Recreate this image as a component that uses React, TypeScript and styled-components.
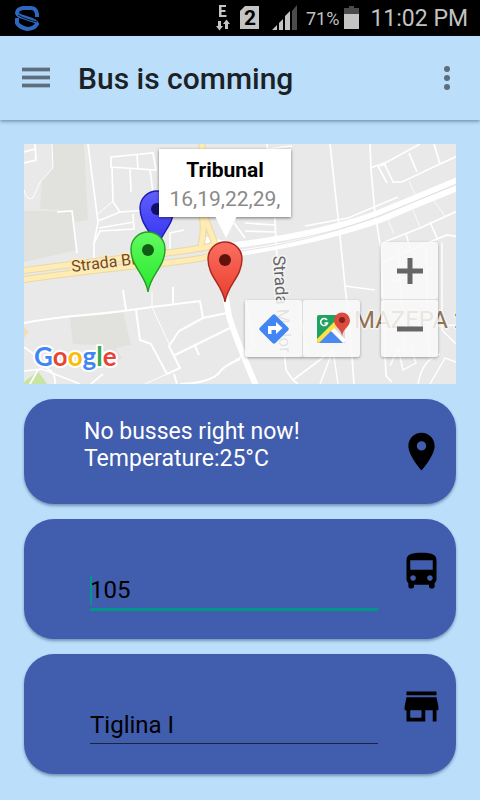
import React from "react";
import styled, { createGlobalStyle } from "styled-components";
import { MdPlace, MdDirectionsBus, MdStore } from "react-icons/md";

const GlobalStyle = createGlobalStyle`
  * { box-sizing: border-box; }
  body { margin: 0; background: #bbdefb; font-family: Roboto, sans-serif; }
  button, input { font-family: inherit; }
`;

const Screen = styled.div`
  min-height: 100vh;
  background: #bbdefb;
`;

const StatusBar = styled.div`
  display: flex;
  align-items: center;
  justify-content: space-between;
  height: 36px;
  padding: 0 12px 0 15px;
  background: #000;
  color: #c2c2c2;
`;

const StatusGroup = styled.div`
  display: flex;
  align-items: center;
`;

const Battery = styled.span`
  margin-left: 8px;
  margin-right: 5px;
  font-size: 18px;
`;

const Clock = styled.time`
  margin-left: 11px;
  padding-top: 2px;
  font-size: 23px;
  line-height: 34px;
`;

const AppBar = styled.header`
  display: flex;
  align-items: center;
  height: 84px;
  padding: 0 9px 0 12px;
  background: #bbdefb;
  box-shadow: 0 1px 4px rgba(20, 50, 80, 0.55);
`;

const BarButton = styled.button`
  display: flex;
  align-items: center;
  justify-content: center;
  width: 48px;
  height: 48px;
  padding: 0;
  border: 0;
  background: transparent;
  color: #5d6e7c;
`;

const Title = styled.h1`
  flex: 1;
  margin: 0 0 0 18px;
  padding-top: 2px;
  font-size: 30px;
  line-height: 36px;
  font-weight: 500;
  color: #1b2125;
`;

const Content = styled.main`
  display: flex;
  flex-direction: column;
  gap: 15px;
  padding: 24px;
`;

const MapPanel = styled.section`
  position: relative;
  height: 240px;
  overflow: hidden;
  background: #e9e9e9;
`;

const MapDrawing = styled.svg`
  display: block;
  width: 100%;
  height: 100%;
`;

const InfoWindow = styled.div`
  position: absolute;
  top: 5px;
  left: 135px;
  width: 132px;
  height: 68px;
  padding: 8px 0;
  background: #fff;
  box-shadow: 0 1px 3px rgba(0, 0, 0, 0.5);
  text-align: center;
  font-size: 21px;
  &::after {
    content: "";
    position: absolute;
    top: 67px;
    left: 56px;
    border: 11px solid transparent;
    border-top: 22px solid #fff;
    border-bottom: 0;
  }
`;

const InfoTitle = styled.div`
  line-height: 26px;
  font-weight: 700;
  color: #000;
`;

const InfoText = styled.div`
  line-height: 32px;
  color: #8a8a8a;
`;

const MapControls = styled.div<{ $vertical?: boolean }>`
  position: absolute;
  right: ${(p) => (p.$vertical ? "18px" : "96px")};
  bottom: 27px;
  display: flex;
  flex-direction: ${(p) => (p.$vertical ? "column" : "row")};
  gap: 1px;
  border-radius: 3px;
  background: rgba(205, 205, 205, 0.4);
  box-shadow: 0 1px 3px rgba(0, 0, 0, 0.35);
`;

const MapButton = styled.button`
  display: flex;
  align-items: center;
  justify-content: center;
  width: 57px;
  height: 57px;
  padding: 0;
  border: 0;
  border-radius: 3px;
  background: rgba(255, 255, 255, 0.75);
`;

const Card = styled.section<{ $short?: boolean }>`
  display: flex;
  justify-content: space-between;
  min-height: ${(p) => (p.$short ? "105px" : "120px")};
  padding: 0 12px 0 ${(p) => (p.$short ? "60px" : "66px")};
  border-radius: 30px;
  background: #415dae;
  box-shadow: 0 2px 3px rgba(30, 60, 100, 0.45);
`;

const Message = styled.p`
  margin: 19px 0 0;
  font-size: 23px;
  line-height: 27px;
  color: #fff;
`;

const CardIcon = styled.label`
  display: flex;
  flex: none;
  margin-top: 30px;
  font-size: 45px;
  color: #000;
  height: 45px;
`;

const Field = styled.div`
  position: relative;
  flex: 1;
  margin-top: 53px;
  margin-right: 21px;
`;

const FieldInput = styled.input<{ $active?: boolean }>`
  display: block;
  width: 100%;
  height: ${(p) => (p.$active ? "39px" : "37px")};
  padding: 0;
  border: 0;
  border-bottom: ${(p) => (p.$active ? "3px solid #009688" : "1px solid #1b2340")};
  border-radius: 0;
  outline: 0;
  background: transparent;
  font-size: 24px;
  color: #000;
`;

const Caret = styled.span`
  position: absolute;
  left: 0;
  top: 4px;
  width: 2px;
  height: 29px;
  background: #009688;
`;

const PIN =
  "M0 0C-2 -17 -17 -25 -17 -43C-17 -53 -9 -60 0 -60C9 -60 17 -53 17 -43C17 -25 2 -17 0 0Z";

function Pin({ x, y, fill, edge, dot }: { x: number; y: number; fill: string; edge: string; dot: string }) {
  return (
    <g transform={`translate(${x} ${y})`}>
      <path d={PIN} fill={`url(#${fill})`} stroke={edge} strokeWidth="1.4" />
      <circle cy="-42" r="6" fill={dot} />
    </g>
  );
}

function CityMap() {
  return (
    <MapDrawing viewBox="24 144 432 240" preserveAspectRatio="xMinYMin slice" role="img" aria-label="Map">
      <defs>
        <linearGradient id="redPin" x1="0" y1="0" x2="0" y2="1"><stop stopColor="#fb6f61" /><stop offset="1" stopColor="#e93c2b" /></linearGradient>
        <linearGradient id="greenPin" x1="0" y1="0" x2="0" y2="1"><stop stopColor="#62fa61" /><stop offset="1" stopColor="#27e929" /></linearGradient>
        <linearGradient id="bluePin" x1="0" y1="0" x2="0" y2="1"><stop stopColor="#605ffb" /><stop offset="1" stopColor="#302df0" /></linearGradient>
      </defs>
      <rect x="24" y="144" width="432" height="240" fill="#e9e9e9" />
      <g fill="#e1e2dd">
        <path d="M52 144H84L88 220L75 222L73 211L24 211V262L77 250L73 211L40 209L42 180L53 168Z" />
        <path d="M70 318L123 312L131 345L115 348L122 358L113 364L100 345L73 344Z" />
      </g>
      <path d="M24 382L38 371L47 384H24Z" fill="#c9e3a5" />
      <path d="M24 327L29 332L24 338Z" fill="#f5dcbb" />
      <g fill="none" stroke="#fff" strokeWidth="1.7">
        <path d="M24 163L36 160L35 144M24 152L35 149M88 144L98 222L94 243V258M57 212L72 211L77 253" />
        <path d="M52 144L53 168L40 182L33 198Q27 202 24 190" strokeWidth="1" />
        <path d="M111 157L153 153L156 170L111 167ZM137 155L138 169M130 168L131 192M150 169L153 193M112 167L113 202L120 212M98 221L120 212L148 210M99 228L134 222M94 243L100 231L134 229L133 214M170 251V233L184 230" />
        <path d="M24 323Q50 318 85 315T152 307L200 301L203 318M123 290L126 310M136 310L140 340L151 344L167 374L180 368L169 346L179 331L203 318L227 313M173 287V304M175 355L230 328M195 346L199 355M174 374L177 384M180 384Q210 383 219 373Q223 366 240 359" strokeWidth="2" />
        <path d="M152 292V307L170 346M113 201L98 214M167 374L145 384" strokeWidth="1" />
        <path d="M24 347L35 355M24 371L42 369L80 384M46 368Q56 372 55 384M38 370L30 384M91 384L103 374" />
        <path d="M267 144L275 220L277 260L280 310L286 370L293 380L333 350M267 149L292 146M293 380L298 384M245 223L275 225M245 231L275 232M234 223L245 238" />
        <path d="M330 144L338 217L345 286L350 330L354 384M345 286L375 290M370 144L371 170L375 213L381 250L384 330L386 376L392 382M305 226L348 218L398 197" />
        <path d="M370 168L387 162L420 144M378 166L387 183M385 165L393 182L402 182L440 164L460 155M380 166L386 164M409 153L417 172M434 144L440 164M382 243L420 228L460 210M430 222L437 238M406 234L410 248M382 262L447 235L460 237" />
        <path d="M382 329L456 325M442 243L442 330L456 344M390 366L398 348L403 370L416 363L410 345M418 384Q422 360 440 354M430 384L445 358L456 362M392 282L432 268M398 244L405 355M426 246L429 358M382 301H438M298 300L307 354M246 300L254 348L233 362M320 384L333 350L338 384" strokeWidth="1.4" />
        <path d="M409 181L416 196M413 210L420 227M386 215L394 234M432 198L445 216" strokeWidth="0.8" />
      </g>
      <g fill="none" stroke="#fff" strokeLinejoin="round">
        <path d="M218 247Q310 237 373 215Q410 200 460 179M218 256Q310 244 380 220Q420 203 460 187" strokeWidth="6" />
        <path d="M225 294L229 316Q234 334 257 388" strokeWidth="6" />
        <path d="M204 240L232 246L226 262" strokeWidth="7" />
      </g>
      <path d="M236 252Q310 242 376 217Q418 200 460 183" fill="none" stroke="#dcdcdc" strokeWidth="0.8" />
      {[{ c: "#e8d9a5", w: 7 }, { c: "#ffebb4", w: 5 }].map((road) => (
        <g key={road.c} fill="none" stroke={road.c} strokeWidth={road.w} strokeLinejoin="round">
          <path d="M20 271Q90 262 150 255T218 244M20 280Q100 269 155 264T218 253" />
          <path d="M202 140V215Q205 230 201 246M204 215L215 244" />
        </g>
      ))}
      <g stroke="#f4f4f4" strokeWidth="3" paintOrder="stroke" strokeLinejoin="round">
        <text x="72" y="272" transform="rotate(-7 72 272)" fontSize="16" fill="#704a27" stroke="#ffebb4">Strada Bra</text>
        <text x="273" y="256" transform="rotate(86 273 256)" fontSize="17" fill="#666">Strada Molor</text>
        <text x="354" y="328" fontSize="24" fill="#927350">MAZEPA 2</text>
      </g>
      <Pin x={157} y={251} fill="bluePin" edge="#1c1cb0" dot="#11116a" />
      <Pin x={148} y={292} fill="greenPin" edge="#249c25" dot="#125d15" />
      <Pin x={225} y={302} fill="redPin" edge="#a8281c" dot="#5f130d" />
      <text x="34" y="366" fontFamily="Lato, sans-serif" fontSize="26" fontWeight="700" stroke="#fff" strokeWidth="4" paintOrder="stroke" strokeLinejoin="round">
        <tspan fill="#4285f4">G</tspan><tspan fill="#ea4335">o</tspan><tspan fill="#fbbc05">o</tspan><tspan fill="#4285f4">g</tspan><tspan fill="#34a853">l</tspan><tspan fill="#ea4335">e</tspan>
      </text>
    </MapDrawing>
  );
}

function SignalIcons() {
  return (
    <svg width="76" height="28" viewBox="214 4 76 28" aria-hidden="true">
      <path d="M218 5H225V7H220.5V10H224.5V12H220.5V15H225.5V17H218Z" fill="#c4c4c4" />
      <path d="M217 21H220V26H222L218.500 30.500L215 26H217ZM224 29H227V24H229L225.500 19.500L222 24H224Z" fill="#c4c4c4" />
      <path d="M244 6H258V29H239V11Z" fill="#c4c4c4" />
      <text x="249" y="25" textAnchor="middle" fontSize="21" fontWeight="700" fill="#000">2</text>
      <path d="M271 30L276 25V30ZM278 23L282 19V30H278ZM284 16L289 11V30H284Z" fill="#c4c4c4" />
    </svg>
  );
}

export default function App() {
  return (
    <>
      <GlobalStyle />
      <Screen>
        <StatusBar>
          <svg width="24" height="25" viewBox="0 0 24 25" fill="none" stroke="#2e67c0" strokeWidth="4" aria-hidden="true">
            <path d="M22 11V8Q21 2 16 2H8Q2 3 2 7Q3 10 8 11L17 14Q22 16 22 18Q19 23 12 23Q4 21 2 17V12" />
            <path d="M3 9Q6 11 12 13T22 16" stroke="#000" strokeWidth="0.8" />
          </svg>
          <StatusGroup>
            <SignalIcons />
            <svg width="7" height="26" viewBox="0 0 7 26" aria-hidden="true"><path d="M1 6L6 0V25H1Z" fill="#4b4b4b" /></svg>
            <Battery>71%</Battery>
            <svg width="15" height="24" viewBox="0 0 15 24" aria-hidden="true">
              <path d="M5 0H10V2H15V9H0V2H5Z" fill="#4b4b4b" />
              <path d="M0 8H15V23H0Z" fill="#c4c4c4" />
            </svg>
            <Clock>11:02 PM</Clock>
          </StatusGroup>
        </StatusBar>
        <AppBar>
          <BarButton aria-label="Open menu">
            <svg width="28" height="22" viewBox="0 0 28 22" stroke="currentColor" strokeWidth="3">
              <path d="M0 2.500H28M0 10.500H28M0 18.500H28" />
              <path d="M0 2.500H28M0 10.500H28M0 18.500H28" strokeWidth="5" opacity="0.35" />
            </svg>
          </BarButton>
          <Title>Bus is comming</Title>
          <BarButton aria-label="More options">
            <svg width="6" height="24" viewBox="0 0 6 24" fill="currentColor">
              <circle cx="3" cy="3" r="3" /><circle cx="3" cy="12" r="3" /><circle cx="3" cy="21" r="3" />
            </svg>
          </BarButton>
        </AppBar>
        <Content>
          <MapPanel>
            <CityMap />
            <InfoWindow>
              <InfoTitle>Tribunal</InfoTitle>
              <InfoText>16,19,22,29,</InfoText>
            </InfoWindow>
            <MapControls>
              <MapButton aria-label="Directions">
                <svg width="30" height="30" viewBox="0 0 30 30">
                  <path d="M13.500 1Q15 -0.500 16.500 1L29 13.500Q30.500 15 29 16.500L16.500 29Q15 30.500 13.500 29L1 16.500Q-0.500 15 1 13.500Z" fill="#4285f4" />
                  <path d="M9 20V12H17V8L23.500 14L17 20V16H12.500V20Z" fill="#fff" />
                </svg>
              </MapButton>
              <MapButton aria-label="Open in maps">
                <svg width="36" height="36" viewBox="0 0 36 36">
                  <defs><clipPath id="tile"><rect x="3" y="4" width="28" height="28" rx="2" /></clipPath></defs>
                  <g clipPath="url(#tile)">
                    <path d="M3 4H31V32H3Z" fill="#1ea362" />
                    <path d="M17 18L31 4V32Z" fill="#dadada" />
                    <path d="M3 32L17 18L31 32Z" fill="#4a89f3" />
                    <path d="M3 32V28L22 9L26 13L5 34Z" fill="#ffe047" />
                    <path d="M3 34L17 20L31 34Z" fill="#4a89f3" />
                    <path d="M17 20L31 34L34 31L20 17Z" fill="#fff" />
                  </g>
                  <path d="M13 9A3.500 3.500 0 1 0 13.500 12H10.500" fill="none" stroke="#fff" strokeWidth="1.600" />
                  <path d="M28 26C28 18 20 16 20 9.500A8 8 0 0 1 36 9.500C36 16 28 18 28 26Z" fill="#dc4b3e" />
                  <circle cx="28" cy="9" r="3" fill="#7f231d" />
                </svg>
              </MapButton>
            </MapControls>
            <MapControls $vertical>
              <MapButton aria-label="Zoom in">
                <svg width="26" height="26" viewBox="0 0 26 26" stroke="#666" strokeWidth="5"><path d="M13 0V26M0 13H26" /></svg>
              </MapButton>
              <MapButton aria-label="Zoom out">
                <svg width="26" height="26" viewBox="0 0 26 26" stroke="#666" strokeWidth="5"><path d="M0 13H26" /></svg>
              </MapButton>
            </MapControls>
          </MapPanel>
          <Card $short>
            <Message>No busses right now!<br />Temperature:25°C</Message>
            <CardIcon as="span"><MdPlace /></CardIcon>
          </Card>
          <Card>
            <Field>
              <FieldInput id="bus" $active aria-label="Bus number" defaultValue="105" />
              <Caret />
            </Field>
            <CardIcon htmlFor="bus"><MdDirectionsBus /></CardIcon>
          </Card>
          <Card>
            <Field>
              <FieldInput id="station" aria-label="Station" defaultValue="Tiglina I" />
            </Field>
            <CardIcon htmlFor="station"><MdStore /></CardIcon>
          </Card>
        </Content>
      </Screen>
    </>
  );
}
